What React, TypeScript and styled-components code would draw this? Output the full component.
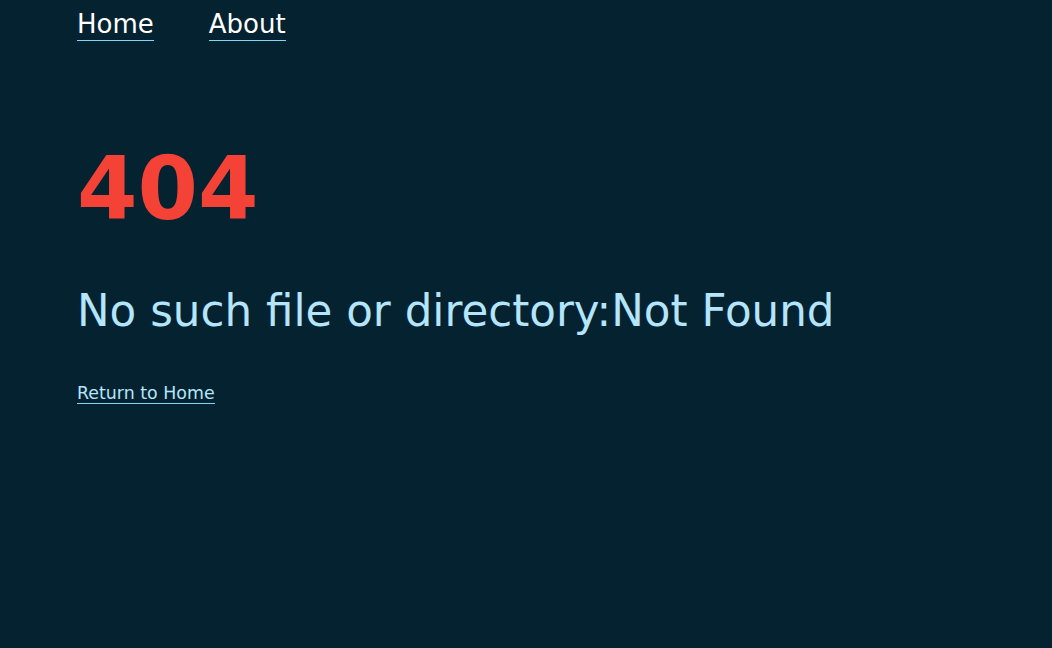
import React from 'react'
import styled, { createGlobalStyle } from 'styled-components'

const GlobalStyle = createGlobalStyle`
    html, body {
        margin: 0;
        padding: 0;
        background-color: #052230;
        font-family: "DejaVu Sans", sans-serif;
    }
`

const Page = styled.div`
    min-height: 100vh;
    padding: 0 77px;
    box-sizing: border-box;
`

const Nav = styled.nav`
    display: flex;
    gap: 55px;
    padding-top: 9px;
`

const NavLink = styled.a`
    color: #ffffff;
    font-size: 26px;
    line-height: 1.2;
    text-decoration: none;
    border-bottom: 1px solid #81d4fa;
`

const Main = styled.main`
    display: flex;
    flex-direction: column;
    align-items: flex-start;
    margin-top: 105px;
`

const Code = styled.h1`
    color: #f44336;
    font-size: 87px;
    font-weight: bold;
    margin: 0;
    line-height: 1;
`

const Message = styled.h2`
    color: #b3e5fc;
    font-size: 43.6px;
    font-weight: normal;
    margin: 53px 0 0;
`

const HomeLink = styled.a`
    color: #b3e5fc;
    font-size: 17.4px;
    text-decoration: none;
    border-bottom: 1px solid #81d4fa;
    margin-top: 47px;
`

const App: React.FC = () => {
    return (
        <Page>
            <GlobalStyle />
            <Nav>
                <NavLink href="#">Home</NavLink>
                <NavLink href="#">About</NavLink>
            </Nav>
            <Main>
                <Code>404</Code>
                <Message>No such file or directory:Not Found</Message>
                <HomeLink href="#">Return to Home</HomeLink>
            </Main>
        </Page>
    )
}

export default App
